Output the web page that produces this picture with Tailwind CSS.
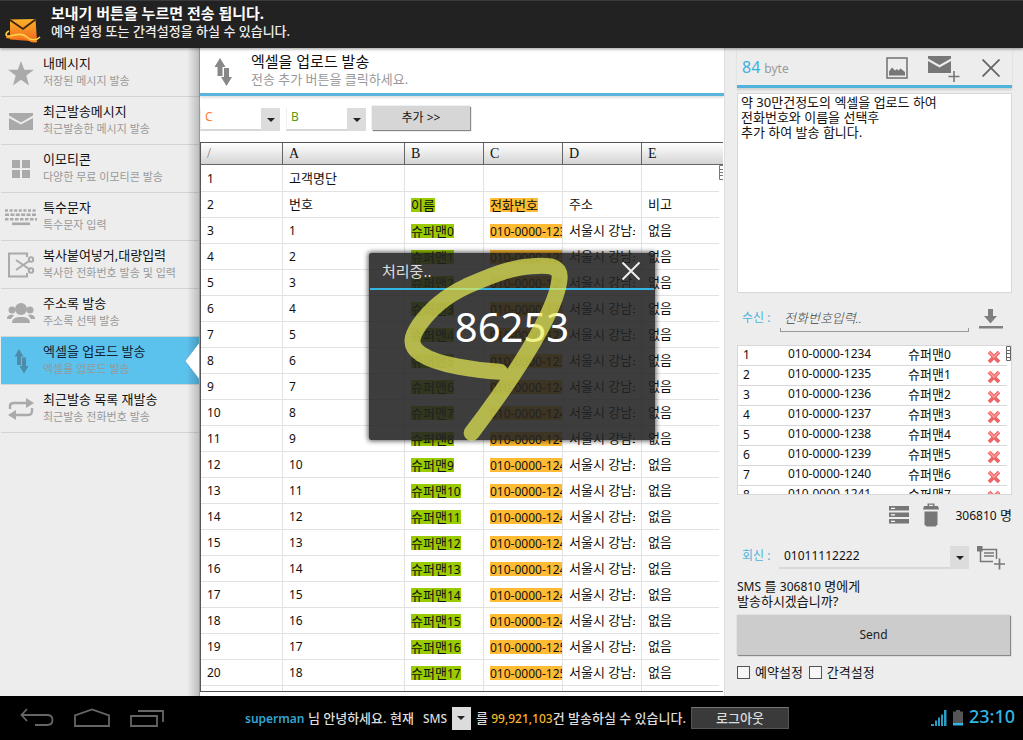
<!DOCTYPE html>
<html lang="ko">
<head>
<meta charset="utf-8">
<meta name="viewport" content="width=device-width, initial-scale=1">
<title>엑셀을 업로드 발송</title>
<script src="https://cdn.jsdelivr.net/npm/@tailwindcss/browser@4"></script>
</head>
<body class="h-screen flex flex-col overflow-hidden bg-white text-[13px] leading-4 text-[#111] font-['Noto_Sans','Noto_Sans_CJK_KR',sans-serif]">

<header class="h-12 shrink-0 flex items-center bg-[#222] border-t border-[#3a3a3a] text-white relative z-10 shadow-[0_1px_3px_rgba(0,0,0,.4)]">
  <svg class="w-[37px] h-7 ml-1 mt-[10px]" viewBox="0 0 37 28" aria-hidden="true">
    <defs><linearGradient id="env" x1="0" y1="0" x2="0" y2="1"><stop offset="0" stop-color="#fbb32a"/><stop offset="1" stop-color="#f0641c"/></linearGradient></defs>
    <path d="M6 3.500 L31.500 3 L33 25.500 L6 23.500 Z" fill="url(#env)"/>
    <path d="M6 4 L19 13 L31.500 3.500" fill="none" stroke="#3a2412" stroke-width="1.800"/>
    <path d="M5 15 C1 17 1 21 6 20 C14 18 19 17 24 22 C28 25 33 24 36 21" fill="none" stroke="#ffd24a" stroke-width="1.600"/>
    <path d="M2 21 C10 24 16 18 23 23 C27 26 31 26 33 25" fill="none" stroke="#f58a1f" stroke-width="1.500"/>
  </svg>
  <div class="ml-[10px] -mt-[6px]">
    <h1 class="text-[15px] leading-[18px] font-bold">보내기 버튼을 누르면 전송 됩니다.</h1>
    <p class="text-[13px] leading-[18px] font-medium text-[#eee]">예약 설정 또는 간격설정을 하실 수 있습니다.</p>
  </div>
</header>

<div class="flex-1 min-h-0 flex">
  <nav class="w-[200px] shrink-0 bg-[#ededed] relative border-r border-[#999]">
    <ul id="menu" class="pt-px"></ul>
    <div class="absolute inset-y-0 right-0 w-3 bg-linear-to-r from-black/0 to-black/20 pointer-events-none"></div>
    <svg class="absolute right-0 top-[294px] w-[14px] h-[38px]" viewBox="0 0 14 38" aria-hidden="true"><path d="M14 1 L0 19 L14 37" fill="#fff" stroke="#3c88a8" stroke-opacity=".5"/></svg>
  </nav>

  <main class="flex-1 min-w-0 flex flex-col pb-1 relative">
    <div class="h-12 shrink-0 flex border-b-[3px] border-[#5ab5dc] shadow-[0_2px_2px_rgba(0,0,0,.12)]">
      <svg class="w-5 h-8 ml-[13px] mt-2" viewBox="0 0 20 32" fill="#888" aria-hidden="true"><path d="M7 2 L12.500 11 H9.500 V20 H4.500 V11 H1.500 Z"/><path d="M11 12 H16 V21 H19 L13.500 30 L8 21 H11 Z"/></svg>
      <div class="ml-[18px] pt-1">
        <h2 class="text-[15px] leading-[18px]">엑셀을 업로드 발송</h2>
        <p class="text-[13px] leading-[18px] text-[#999]">전송 추가 버튼을 클릭하세요.</p>
      </div>
    </div>

    <form class="flex gap-[6px] mt-[10px] mb-[11px] h-[25px] shrink-0" onsubmit="return false">
      <div class="relative w-20 h-[23px] mt-[2px] border-b-2 border-l border-[#d8d8d8] [border-left-color:#eee]">
        <select aria-label="전화번호 열" class="appearance-none w-full h-[17px] pl-1 text-xs leading-4 text-[#ff7a33] bg-transparent outline-none"><option>C</option></select>
        <span class="absolute right-0 top-0 w-[19px] h-[23px] bg-[#dcdcdc] flex items-center justify-center pointer-events-none"><svg class="w-2 h-1" viewBox="0 0 8 4"><path d="M0 0H8L4 4Z" fill="#222"/></svg></span>
      </div>
      <div class="relative w-20 h-[23px] mt-[2px] border-b-2 border-l border-[#d8d8d8] [border-left-color:#eee]">
        <select aria-label="이름 열" class="appearance-none w-full h-[17px] pl-1 text-xs leading-4 text-[#5a9a10] bg-transparent outline-none"><option>B</option></select>
        <span class="absolute right-0 top-0 w-[19px] h-[23px] bg-[#dcdcdc] flex items-center justify-center pointer-events-none"><svg class="w-2 h-1" viewBox="0 0 8 4"><path d="M0 0H8L4 4Z" fill="#222"/></svg></span>
      </div>
      <button class="w-[98px] h-6 bg-[#d6d6d6] text-xs leading-4 shadow-[1px_1px_1px_#888,0_0_1px_#aaa]">추가 &gt;&gt;</button>
    </form>

    <div class="flex-1 min-h-0 overflow-hidden relative border border-r-0 border-[#555] mr-[1px]">
      <table class="w-full table-fixed border-separate border-spacing-0">
        <colgroup><col class="w-[82px]"><col class="w-[122px]"><col class="w-[79px]"><col class="w-[79px]"><col class="w-[79px]"><col></colgroup>
        <thead class="text-left text-sm leading-4 font-['Liberation_Serif',serif]">
          <tr class="[&>th]:h-[22px] [&>th]:px-[6px] [&>th]:py-0 [&>th]:font-normal [&>th]:border-b [&>th]:border-r [&>th]:border-[#666] [&>th]:bg-linear-to-b [&>th]:from-white [&>th]:to-[#d4d4d4] [&>th:last-child]:border-r-0">
            <th class="text-[#777]">/</th><th>A</th><th>B</th><th>C</th><th>D</th><th>E</th>
          </tr>
        </thead>
        <tbody id="sheet"></tbody>
      </table>
      <div class="absolute right-0 top-[22px] bottom-0 w-[4px] bg-white">
        <svg class="w-[4px] h-[15px]" viewBox="0 0 4 15" fill="none" stroke="#777"><path d="M4 .5H.5V14.500H4M1 4.500H4M1 7.500H4M1 10.500H4"/></svg>
      </div>
    </div>

    <section role="dialog" aria-label="처리중" class="absolute left-[169px] top-[205px] w-[286px] h-[187px] rounded-[2px] bg-[#222]/88 shadow-[0_0_5px_1px_rgba(0,0,0,.65)]">
      <div class="h-[37px] mx-px flex items-center justify-between border-b-2 border-[#33b5e5] pl-3 pr-[13px]">
        <h3 class="text-[15px] leading-5 text-[#ddd]">처리중..</h3>
        <button aria-label="닫기"><svg class="w-5 h-5" viewBox="0 0 20 20"><path d="M1.500 1.500L18.500 18.500M18.500 1.500L1.500 18.500" stroke="#eee" stroke-width="2"/></svg></button>
      </div>
      <p class="text-center text-[40px] leading-[48px] mt-[13px] text-white">86253</p>
      <svg class="absolute inset-0 w-full h-full overflow-visible pointer-events-none opacity-70 blur-[0.6px]" viewBox="27 24 858 558" fill="none" stroke="#e8ed55" stroke-width="48" stroke-linecap="round" stroke-linejoin="round" aria-hidden="true">
        <path d="M420 379 C350 375 235 360 182 325 C145 300 155 272 178 238 C215 185 270 145 320 122 C380 96 455 64 515 62 C570 58 605 60 598 105 C592 150 570 195 545 245 C490 350 420 450 335 562"/>
      </svg>
    </section>
  </main>

  <aside class="w-[299px] shrink-0 bg-[#ededed] border-l border-[#ddd] pl-3 pr-[11px] flex flex-col relative">
    <div class="h-10 shrink-0 flex items-center border-b-[3px] border-[#4fb3dc] pl-[5px] pr-3 shadow-[0_2px_2px_rgba(0,0,0,.12)]">
      <p class="flex-1 flex items-baseline gap-1"><span class="text-base leading-5 text-[#3fb0e2]">84</span><span class="text-xs text-[#999]">byte</span></p>
      <button aria-label="사진" class="mt-[3px]"><svg class="w-[22px] h-[22px]" viewBox="0 0 22 22"><rect x="1" y="1" width="20" height="20" fill="none" stroke="#777" stroke-width="1.600"/><path d="M3 18.500V14.500L6 10.500L9 13.500L11 12L12.500 13.500L14.500 11.500L19 15V18.500Z" fill="#777"/></svg></button>
      <button aria-label="메시지 추가" class="ml-5 mt-1"><svg class="w-8 h-7" viewBox="0 0 32 28"><path d="M0 1H23V3.500L11.500 10L0 3.500ZM0 6L11.500 12.500L23 6V18H0Z" fill="#777"/><path d="M26 16V27M20.500 21.500H31.500" stroke="#777" stroke-width="1.600"/></svg></button>
      <button aria-label="닫기" class="ml-[22px] mt-[3px]"><svg class="w-[18px] h-[18px]" viewBox="0 0 18 18"><path d="M.5 .5L17.500 17.500M17.500 .5L.5 17.500" stroke="#666" stroke-width="1.800"/></svg></button>
    </div>

    <textarea aria-label="메시지" class="mt-[5px] h-[200px] shrink-0 w-full resize-none bg-white border border-[#d8d8d8] px-[3px] py-px text-[13px] leading-[15px] outline-none">약 30만건정도의 엑셀을 업로드 하여
전화번호와 이름을 선택후
추가 하여 발송 합니다.</textarea>

    <div class="mt-4 flex h-[23px] shrink-0 pl-[5px]">
      <label for="to" class="w-[38px] text-xs leading-[18px] text-[#4fb3dc]">수신 :</label>
      <div class="w-[189px] h-[23px] relative">
        <input id="to" placeholder="전화번호입력.." class="w-full h-[18px] px-1 italic font-light text-[13px] leading-[18px] bg-transparent outline-none placeholder:text-[#444]">
        <span class="absolute inset-x-0 bottom-0 h-1 border border-t-0 border-[#999] pointer-events-none"></span>
      </div>
      <button aria-label="불러오기" class="ml-[10px] -mt-1"><svg class="w-6 h-5" viewBox="0 0 24 20" fill="#808080"><path d="M9 0H14V7H18L11.500 14.500L5 7H9ZM0 17H24V19.500H0Z"/></svg></button>
    </div>

    <div class="mt-[13px] h-[150px] shrink-0 relative bg-white border border-[#d8d8d8] overflow-hidden">
      <table class="w-[269px] table-fixed border-separate border-spacing-0">
        <colgroup><col class="w-[50px]"><col class="w-[120px]"><col class="w-[76px]"><col></colgroup>
        <tbody id="recipients"></tbody>
      </table>
      <svg class="absolute right-0 top-0 w-[5px] h-[16px]" viewBox="0 0 5 16" fill="none" stroke="#666"><path d="M.5 .5H4.500V14.500H.5ZM1 4.500H4M1 7.500H4M1 11.500H4"/></svg>
    </div>

    <div class="mt-2 h-6 shrink-0 flex items-center justify-end">
      <button aria-label="목록"><svg class="w-5 h-5" viewBox="0 0 20 20"><path d="M0 1H20V5.500H0ZM0 7.500H20V12H0ZM0 14H20V18.500H0Z" fill="#777"/><path d="M2 3.300H6M2 9.800H6M2 16.300H6" stroke="#fff" stroke-width="1.200"/></svg></button>
      <button aria-label="삭제" class="ml-[14px]"><svg class="w-4 h-6" viewBox="0 0 16 24" fill="#777"><path d="M4.500 3V.5H11.500V3H15L16 6.500H0L1 3ZM6 3H10V1.800H6Z" fill-rule="evenodd"/><path d="M1.500 8.500H14.500V21.500L12.500 23.500H3.500L1.500 21.500Z"/></svg></button>
      <p class="ml-4"><span class="text-xs">306810</span> 명</p>
    </div>

    <div class="mt-[19px] h-6 shrink-0 flex pl-[5px]">
      <label for="from" class="w-[37px] text-xs leading-5 text-[#4fb3dc]">회신 :</label>
      <div class="relative w-[190px] h-[23px] border-b-2 border-[#d8d8d8]">
        <select id="from" class="appearance-none w-full h-5 pl-[5px] text-xs leading-5 bg-transparent outline-none"><option>01011112222</option></select>
        <span class="absolute right-0 top-0 w-[19px] h-[23px] bg-[#dcdcdc] flex items-center justify-center pointer-events-none"><svg class="w-2 h-1" viewBox="0 0 8 4"><path d="M0 0H8L4 4Z" fill="#222"/></svg></span>
      </div>
      <button aria-label="회신번호 추가" class="ml-2"><svg class="w-7 h-6" viewBox="0 0 28 24" fill="none" stroke="#777"><path d="M0 0H5.500V5.500H0Z" fill="#777" stroke="none"/><path d="M5 3.500H19.500V13M3.500 5V15.500H16" stroke-width="1.500"/><path d="M7 7H17M7 10H17" stroke-width="1.300"/><path d="M22.500 12.500V23.500M17 18H28" stroke-width="1.700"/></svg></button>
    </div>

    <p class="mt-[9px] leading-[15px]"><span class="text-xs leading-[15px]">SMS</span> 를 <span class="text-xs leading-[15px]">306810</span> 명에게<br>발송하시겠습니까?</p>
    <button class="mt-[6px] h-10 shrink-0 mr-[2px] bg-[#ccc] text-xs leading-4 text-[#222] shadow-[1px_1px_1px_#888,0_0_1px_#aaa]">Send</button>
    <div class="mt-2 flex items-center gap-[5px] leading-[18px]">
      <input id="reserve" type="checkbox" class="appearance-none w-[13px] h-[13px] bg-[#f6f6f6] border border-[#555] checked:bg-[#555]"><label for="reserve" class="text-[13px]">예약설정</label>
      <input id="interval" type="checkbox" class="appearance-none w-[13px] h-[13px] ml-px bg-[#f6f6f6] border border-[#555] checked:bg-[#555]"><label for="interval" class="text-[13px]">간격설정</label>
    </div>
  </aside>
</div>

<footer class="h-11 shrink-0 bg-black flex items-center text-[#ddd] font-medium relative z-10">
  <div class="flex gap-5 ml-5 w-[225px]">
    <button aria-label="뒤로"><svg class="w-[34px] h-5" viewBox="0 0 34 20" fill="none" stroke="#666" stroke-width="1.800"><path d="M7 1L1.500 7L7 13M1.500 7H27C31 7 32.500 9 32.500 12S31 17 27 17H15"/></svg></button>
    <button aria-label="홈"><svg class="w-9 h-5" viewBox="0 0 36 20" fill="none" stroke="#666" stroke-width="1.800"><path d="M1 18V7.500L18 1.500L35 7.500V18Z"/></svg></button>
    <button aria-label="최근"><svg class="w-[34px] h-5" viewBox="0 0 34 20" fill="none" stroke="#666" stroke-width="1.800"><path d="M1 8H27V18H1ZM8 3H33V14"/></svg></button>
  </div>
  <p class="whitespace-nowrap"><span class="text-xs font-semibold text-[#33a5d0]">superman</span> 님 안녕하세요. 현재</p>
  <div class="relative ml-[9px] w-12 h-[23px] shrink-0">
    <select aria-label="종류" class="appearance-none w-full h-6 text-xs leading-6 font-medium bg-transparent text-[#ddd] outline-none"><option>SMS</option></select>
    <span class="absolute right-0 top-0 w-[19px] h-[23px] bg-[#dcdcdc] flex items-center justify-center pointer-events-none"><svg class="w-2 h-1" viewBox="0 0 8 4"><path d="M0 0H8L4 4Z" fill="#222"/></svg></span>
  </div>
  <p class="ml-[5px] whitespace-nowrap">를 <span class="text-xs font-medium text-[#f5b52e]">99,921,103</span>건 발송하실 수 있습니다.</p>
  <button class="ml-[5px] w-[98px] h-[22px] shrink-0 bg-[#3a3a3a] border border-[#555] border-t-[#777] leading-4">로그아웃</button>
  <div class="ml-auto mr-2 flex items-center gap-[6px]">
    <svg class="w-4 h-4" viewBox="0 0 16 16" fill="#2a9cc4" aria-hidden="true"><path d="M0 14H3V16H0ZM4 10.500H6V16H4ZM7 7.500H9V16H7ZM10 4.500H12V16H10ZM13 0H15.500V16H13Z"/></svg>
    <svg class="w-[10px] h-4" viewBox="0 0 10 16" aria-hidden="true"><path d="M3 0H7V1.500H10V13H0V1.500H3Z" fill="#555"/><path d="M0 13H10V15.500H0Z" fill="#33b5e5"/></svg>
    <time class="text-lg leading-6 text-[#33b5e5] -mt-1">23:10</time>
  </div>
</footer>

<script>
const icons = {
  star: '<path d="M13 1L16.200 9.800H26L18.300 15.500L21 25.500L13 19.800L5 25.500L7.700 15.500L0 9.800H9.800Z"/>',
  mail: '<path d="M1 5H25V7.500L13 14.500L1 7.500ZM1 10L13 16.500L25 10V22H1Z"/>',
  grid: '<path d="M4 4H12V12H4ZM14 4H22V12H14ZM4 14H12V22H4ZM14 14H22V22H14Z"/>',
  keys: '<g fill="none" stroke="#aaa" stroke-width="2.600"><path d="M-3 6.500H29" stroke-dasharray="3 1.600"/><path d="M-3 10.800H29" stroke-dasharray="4 1.400"/><path d="M-3 15.200H29" stroke-dasharray="3.500 1.500"/><path d="M4 19.800H22"/></g>',
  cut: '<g fill="none" stroke="#aaa" stroke-width="2"><path d="M19 5V1.500H1V24.500H19V21"/><path d="M8 8L21 17M8 18L21 9"/><circle cx="23" cy="7.500" r="2.200"/><circle cx="23" cy="18.500" r="2.200"/></g>',
  people: '<circle cx="13" cy="9" r="6"/><path d="M4 23C4 18 8 17 13 17S22 18 22 23Z"/><circle cx="4" cy="10" r="3.500"/><circle cx="22" cy="10" r="3.500"/><path d="M-1 19C-1 15 2 14.500 6 15L3 19ZM27 19C27 15 24 14.500 20 15L23 19Z"/>',
  arrows: '<path fill="#4d8ca8" d="M11 1L15.500 8.500H13V17H9V8.500H6.500ZM14 9.500H18V18H20.500L16 25.500L11.500 18H14Z"/>',
  repeat: '<g fill="none" stroke="#aaa" stroke-width="2.400"><path d="M2 13V10Q2 7 6 7H20M24 12V15Q24 19 20 19H6"/></g><path d="M18 2L26 7L18 12ZM8 14L0 19L8 24Z"/>'
};
const menu = [
  ['star','내메시지','저장된 메시지 발송'],
  ['mail','최근발송메시지','최근발송한 메시지 발송'],
  ['grid','이모티콘','다양한 무료 이모티콘 발송'],
  ['keys','특수문자','특수문자 입력'],
  ['cut','복사붙여넣거,대량입력','복사한 전화번호 발송 및 입력'],
  ['people','주소록 발송','주소록 선택 발송'],
  ['arrows','엑셀을 업로드 발송','엑셀을 업로드 발송'],
  ['repeat','최근발송 목록 재발송','최근발송 전화번호 발송']
];
document.getElementById('menu').innerHTML = menu.map(([icon, title, sub]) => {
  const on = icon === 'arrows';
  return `<li class="h-12 ml-px border-b border-[#d3d3d3] ${on ? 'bg-[#5bc1ed]' : ''}">
    <a href="#" class="flex h-full pl-[7px] whitespace-nowrap">
      <svg class="w-[26px] h-[26px] mt-[11px] shrink-0 overflow-visible" viewBox="0 0 26 26" fill="#aaa" aria-hidden="true">${icons[icon]}</svg>
      <span class="block ml-[9px] pt-[5px]"><span class="block text-[13px] leading-[18px] ${on ? 'text-[#123]' : 'text-[#111]'}">${title}</span><span class="block text-[11px] leading-[18px] text-[#999]">${sub}</span></span>
    </a></li>`;
}).join('');

const cell = 'h-[26px] px-[6px] pt-0 pb-[2px] border-b border-r border-[#e2e2e2] whitespace-nowrap overflow-hidden';
const firstCell = 'h-[27px] px-[6px] py-0 border-b border-r border-[#e2e2e2] whitespace-nowrap overflow-hidden';
const mark = (color, html) => `<span class="inline-block align-middle h-[14px] leading-[14px] ${color}">${html}</span>`;
const num = n => `<span class="text-xs leading-[14px]">${n}</span>`;
let sheet = '';
for (let r = 1; r <= 21; r++) {
  const n = r - 2;
  let cols;
  if (r === 1) cols = [num(1), '고객명단', '', '', '', ''];
  else if (r === 2) cols = [num(2), '번호', mark('bg-[#99cc00]', '이름'), mark('bg-[#ffbb33]', '전화번호'), '주소', '비고'];
  else cols = [num(r), num(n), mark('bg-[#99cc00]', '슈퍼맨' + num(n - 1)), mark('bg-[#ffbb33]', num('010-0000-' + (1233 + n))), '<div class="overflow-hidden">서울시 강남스타일</div>', '없음'];
  sheet += '<tr>' + cols.map(c => `<td class="${r === 1 ? firstCell : cell}">${c}</td>`).join('') + '</tr>';
}
document.getElementById('sheet').innerHTML = sheet;

let rows = '';
for (let i = 1; i <= 8; i++) {
  rows += `<tr class="[&>td]:h-5 [&>td]:p-0 [&>td]:border-b [&>td]:border-[#d8d8d8] leading-4">
    <td class="align-top"><span class="text-xs ml-[5px]">${i}</span></td><td class="text-xs align-top">010-0000-${1233 + i}</td><td class="align-top">슈퍼맨<span class="text-xs">${i - 1}</span></td>
    <td><button aria-label="삭제" class="block ml-[3px] mt-[3px]"><svg class="w-[14px] h-[14px]" viewBox="0 0 14 14"><path d="M2 2L12 12M12 2L2 12" stroke="#ec6464" stroke-width="3.800"/><path d="M2 2L7 7L12 2" fill="none" stroke="#f99" stroke-width="1.600"/></svg></button></td></tr>`;
}
document.getElementById('recipients').innerHTML = rows;
</script>
</body>
</html>
